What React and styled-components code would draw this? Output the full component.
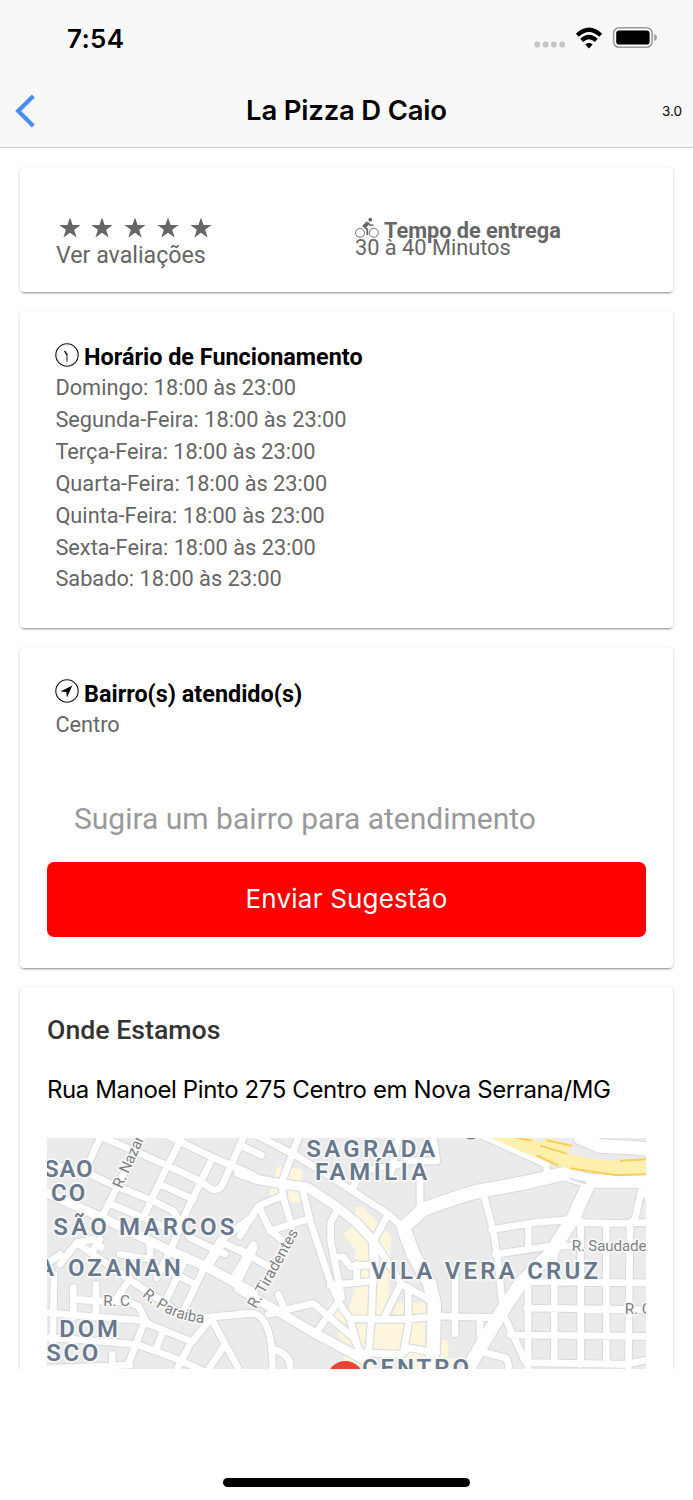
import styled, { createGlobalStyle } from "styled-components";

const GlobalStyle = createGlobalStyle`
  * { box-sizing: border-box; }
  body {
    margin: 0;
    background: #fff;
    font-family: Roboto, "Liberation Sans", sans-serif;
  }
`;

/* ---------------- Layout ---------------- */
const Page = styled.div`
  height: 1500px;
  display: flex;
  flex-direction: column;
  overflow: hidden;
  background: #fff;
`;

const Header = styled.header`
  height: 148px;
  flex: none;
  background: #f8f8f8;
  border-bottom: 1px solid #cfcfcf;
  font-family: Inter, sans-serif;
  color: #000;
`;

const StatusBar = styled.div`
  height: 76px;
  padding: 0 36px 0 67px;
  display: flex;
  align-items: center;
  justify-content: space-between;

  svg {
    margin-top: 2px;
  }
`;

const Time = styled.span`
  font-size: 26px;
  font-weight: 600;
  letter-spacing: 0.35px;
`;

const NavBar = styled.div`
  height: 70px;
  padding: 0 11px 0 15px;
  display: grid;
  grid-template-columns: 60px 1fr 60px;
  align-items: center;

  h1 {
    margin: 0 4px 2px 0;
    font-size: 27.5px;
    font-weight: 600;
    letter-spacing: -0.2px;
    text-align: center;
    white-space: nowrap;
  }

  small {
    font-size: 13.5px;
    text-align: right;
  }
`;

const Content = styled.main`
  height: 1221px;
  flex: none;
  overflow: hidden;
  padding: 19.5px 20px 0;
  display: flex;
  flex-direction: column;
  gap: 19.5px;
`;

const Footer = styled.footer`
  flex: 1;
  display: flex;
  justify-content: center;
  align-items: flex-end;
  padding-bottom: 13px;
`;

const HomeIndicator = styled.div`
  width: 247px;
  height: 9px;
  border-radius: 5px;
  background: #000;
`;

/* ---------------- Cards ---------------- */
const Card = styled.section`
  height: ${(p) => p.$height}px;
  flex: none;
  padding: ${(p) => p.$padding || "31px 27px 0"};
  border-radius: 4px;
  background: #fff;
  box-shadow: 0 3px 2px -2px rgba(0, 0, 0, 0.28), 0 1px 3px rgba(0, 0, 0, 0.24);
`;

const InfoCard = styled(Card)`
  display: grid;
  grid-template-columns: 299px 1fr;
`;

const Rating = styled.div`
  padding-top: 49px;
  color: #666;
`;

const Stars = styled.div`
  display: flex;
  gap: 10.8px;
  padding-left: 2.6px;
  height: 26.5px;
`;

const Delivery = styled.div`
  padding-top: 54.5px;
  color: #666;
  line-height: 17px;
`;

const Title = styled.h2`
  height: ${(p) => p.$height || 30}px;
  margin: 0;
  padding-left: ${(p) => p.$indent || 0}px;
  display: flex;
  align-items: center;
  gap: 5px;
  font-size: ${(p) => p.$size || 23.4}px;
  font-weight: 700;
  white-space: nowrap;

  svg {
    flex: none;
    margin-top: -5px;
  }
`;

const Line = styled.div`
  padding-left: ${(p) => p.$indent || 0}px;
  font-size: ${(p) => p.$size || 21.75}px;
  line-height: ${(p) => p.$height || 31.83}px;
  color: #666;
  white-space: nowrap;
`;

const Hours = styled.div`
  padding-top: 0.4px;
`;

const Suggestion = styled.input`
  display: block;
  width: 100%;
  height: 60px;
  margin-top: 48px;
  padding: 0 27px;
  border: 0;
  outline: 0;
  background: none;
  font: 400 30px Roboto, sans-serif;

  &::placeholder {
    color: #999;
    opacity: 1;
  }
`;

const SendButton = styled.button`
  display: block;
  width: 100%;
  height: 75px;
  margin-top: 14px;
  padding: 0 0 2px;
  border: 0;
  border-radius: 7px;
  background: #ff0000;
  color: #fff;
  font: 400 26px Inter, sans-serif;
  letter-spacing: 0.2px;
`;

const SectionTitle = styled.h2`
  margin: 0;
  color: #333;
  font-size: 26.7px;
  font-weight: 500;
  line-height: 30px;
`;

const Address = styled.p`
  margin: 30px 0 32.5px;
  color: #000;
  font: 400 24px/30px Inter, sans-serif;
  letter-spacing: -0.39px;
  white-space: nowrap;
`;

const MapView = styled.svg`
  display: block;
  width: 599px;
  height: 232px;
  background: #ebebeb;
`;

/* ---------------- Icons ---------------- */
const StatusIcons = () => (
  <svg width="124" height="26" viewBox="0 0 124 26">
    {[1.5, 9.8, 18.1, 26.4].map((x) => (
      <rect key={x} x={x} y="15.6" width="5.6" height="6" rx="2" fill="#c5c5c5" />
    ))}
    <g fill="none" stroke="#000" strokeWidth="4.3">
      <path d="M44.3 9.3 Q56 -1.7 67.7 9.3" />
      <path d="M48.7 14.4 Q56 7.8 63.3 14.4" />
    </g>
    <path d="M52.3 18.4 Q56 15.6 59.7 18.4 L56 22.5Z" fill="#000" />
    <rect x="80.6" y="1.8" width="38.5" height="19.4" rx="5.5" fill="none" stroke="#9b9b9b" strokeWidth="1.6" />
    <rect x="83.2" y="4.4" width="33.4" height="14.2" rx="3.2" fill="#000" />
    <path d="M121 8 Q124 8.8 124 11.5 Q124 14.2 121 15Z" fill="#a5a5a5" />
  </svg>
);

const BackIcon = () => (
  <svg width="21" height="34" viewBox="0 0 21 34">
    <path d="M18.3 2 L3.2 17 L18.3 32" fill="none" stroke="#4a8cff" strokeWidth="4.2" />
  </svg>
);

const Star = () => (
  <svg width="22" height="22" viewBox="0 0 22 22">
    <path d="M11 .5 L13.6 8 H21.6 L15.2 12.7 L17.6 20.4 L11 15.7 L4.4 20.4 L6.8 12.7 L.4 8 H8.4Z" fill="currentColor" />
  </svg>
);

const BikeIcon = () => (
  <svg width="24" height="22" viewBox="0 0 24 22" fill="none" stroke="currentColor">
    <circle cx="5" cy="15.8" r="4.5" strokeWidth=".9" />
    <circle cx="18.8" cy="15.8" r="4.5" strokeWidth=".9" />
    <circle cx="15.3" cy="2.7" r="1.9" fill="currentColor" stroke="none" />
    <path d="M12.4 4.8 L8.4 9 L12.3 12.3 V18.2" strokeWidth="1.8" />
    <path d="M12 5.2 L9 8.5 L11 10 L13.6 7.2" fill="currentColor" strokeWidth="1" />
    <path d="M13 5.5 L15.2 8.3 H18.5" strokeWidth="1.5" />
  </svg>
);

const ClockIcon = () => (
  <svg width="24" height="24" viewBox="0 0 24 24" fill="none" stroke="#111">
    <circle cx="12" cy="12" r="11.2" strokeWidth="1.1" />
    <circle cx="12" cy="12" r="9.3" strokeWidth=".7" strokeDasharray=".7 4.17" opacity=".55" />
    <path d="M9.6 7.8 L11.9 11.9" strokeWidth="1.4" />
    <path d="M12 10.5 V18.8" strokeWidth="1.1" opacity=".85" />
  </svg>
);

const NavigateIcon = () => (
  <svg width="24" height="24" viewBox="0 0 24 24">
    <circle cx="12" cy="12" r="11.2" fill="none" stroke="#111" strokeWidth="1.1" />
    <path d="M17.3 6.5 L5.5 12.5 L11.2 12.9 L12 18.4Z" fill="#000" />
  </svg>
);

/* ---------------- Map ---------------- */
const blocks = [
  "M712 105 L786 115 L785 160 L740 155 L705 195 L688 195Z",
  "M742 170 L780 172 L782 215 L748 212Z",
  "M948 228 H970 L1020 285 L1053 315 L1048 440 L1043 560 H945 L922 545 L944 485 L947 360 L910 308 L940 285Z",
  "M1070 515 H1155 L1155 655 L950 685 L920 690 L890 590 L865 515 L905 510 L940 580 H1050Z",
  "M1195 625 L1226 630 L1222 680 L1243 684 V717 H1080 L1085 665 H1195Z",
  "M912 670 H1000 V717 H912Z",
];

// each entry is one street, grouped by stroke width
const streets = [
  {
    width: 20,
    paths: [
      "M180 20 L140 110", "M190 20 L290 63 L385 105 L480 150 L515 175 Q540 181 550 155 L610 20",
      "M385 15 L520 80 L640 132", "M425 20 L370 130 L310 260", "M300 30 L240 150 L190 250",
      "M20 95 L150 130 L215 160 L340 210 L400 240 L450 320 L555 370",
      "M215 220 L310 260 L400 300", "M515 85 L440 240 L395 350 L350 440",
      "M360 160 L460 205", "M640 255 L540 330 L495 405 L430 540", "M110 335 L260 440 L350 500 L440 560",
      "M60 400 L110 335 L160 325 L185 350", "M110 335 L155 365 L180 325", "M240 370 L330 385 V330",
      "M20 400 L60 370", "M42 430 L38 650", "M20 545 L150 557 L300 568 L450 630",
      "M100 470 V560", "M168 460 V555", "M100 505 L270 515 L295 525 L320 575",
      "M495 560 L630 547", "M515 560 L450 640 L410 717", "M515 565 L605 730", "M555 640 L505 717",
      "M20 620 L170 630 L290 640 L400 680 L490 720", "M310 580 L265 700", "M370 600 L350 650",
      "M20 712 L270 702", "M217 670 V705", "M575 450 L640 340", "M540 330 L640 380",
      "M510 400 L550 335", "M380 505 L440 375", "M400 425 L455 455", "M265 450 L225 510",
      "M600 42 L665 73", "M655 15 L770 75 L900 155 L1045 250 L1090 290",
      "M775 20 L725 155 L730 200 L755 285", "M787 170 L810 270 L870 450 L900 520 L930 565 L960 670",
      "M600 315 L655 225 L725 195", "M655 225 L690 297 L740 340", "M690 300 L810 262",
      "M895 230 L872 275 V330 L890 420 L905 500", "M887 378 H910 L930 407 L1000 400", "M950 400 V450",
      "M870 463 L1000 450", "M600 548 L645 548 Q700 570 697 717", "M700 655 Q755 670 750 717",
      "M685 550 L820 517 L940 620 L965 670", "M715 490 L732 530", "M897 510 L860 560 L825 610",
      "M643 350 L600 440", "M600 355 L690 410", "M1140 80 V240", "M1045 250 L1000 330",
      "M940 170 L960 120 L1080 100", "M1075 20 L1050 140", "M1190 85 L1180 20", "M1100 90 H1190",
      "M930 563 L1100 565 L1200 555 L1360 560", "M960 665 L1085 670 L1105 650 L1190 665",
      "M1105 470 V580 L1090 665", "M1082 460 L1030 565", "M1000 390 L995 560 L985 670",
      "M1000 325 L1085 460 L1185 515", "M1330 15 L1430 60 L1520 100 L1520 140",
      "M1333 200 L1360 300 L1375 400 L1390 550 L1455 690", "M1355 296 L1480 275 L1600 265",
      "M1365 370 L1530 345 L1600 345", "M1465 285 V350", "M1600 275 L1770 278 L1785 265 L1805 175 L1825 200",
      "M1770 275 H1830", "M1464 440 V717", "M1543 360 V690", "M1622 270 V700", "M1699 280 V700",
      "M1770 280 L1765 717", "M1480 452 L1830 456", "M1460 531 L1830 536", "M1410 612 L1830 616",
      "M1460 695 L1760 700 L1830 685", "M1245 430 V608", "M1320 570 V615", "M1315 660 L1395 680 Q1408 690 1405 717",
    ],
  },
  {
    width: 27,
    paths: [
      "M20 185 L130 235 L250 290 L390 360 L495 405 L640 485", "M595 472 L720 545 L830 610 L970 685",
      "M595 125 L650 145 L720 158 L800 168 L880 220 L950 275 L1000 330 L1003 400",
    ],
  },
  {
    width: 40,
    paths: [
      "M1090 290 L1120 370 L1170 460 L1183 520 L1180 640 L1172 730",
      "M1090 290 L1150 235 L1240 203 L1310 182 L1440 158 L1570 128 L1650 150 L1600 260 L1530 370 L1440 460 L1380 550 L1285 710",
      "M1620 20 L1680 45 L1780 50 L1830 55", "M1640 150 L1700 150 L1830 150",
    ],
  },
];

const districts = [
  { text: "SAO", x: 12, y: 139, w: 146 },
  { text: "CO", x: 33, y: 209, w: 103 },
  { text: "SÃO MARCOS", x: 40, y: 313, w: 543 },
  { text: "A", x: -6, y: 436, w: 49 },
  { text: "OZANAN", x: 84, y: 436, w: 338 },
  { text: "DOM", x: 58, y: 619, w: 176 },
  { text: "SCO", x: 19, y: 689, w: 156 },
  { text: "SAGRADA", x: 799, y: 77, w: 387 },
  { text: "FAMÍLIA", x: 825, y: 148, w: 337 },
  { text: "VILA VERA CRUZ", x: 993, y: 443, w: 681 },
  { text: "CENTRO", x: 966, y: 736, w: 321 },
];

const streetNames = [
  { text: "R. Nazaré", x: 245, y: 175, w: 190, angle: -66 },
  { text: "R. C", x: 190, y: 524, w: 80, angle: 0 },
  { text: "R. Tiradentes", x: 648, y: 535, w: 264, angle: -61 },
  { text: "R. Saudades", x: 1595, y: 360, w: 248, angle: 0 },
  { text: "R. Ceará", x: 1754, y: 550, w: 170, angle: 0 },
];

const Label = styled.text`
  font-family: Roboto, sans-serif;
  font-size: ${(p) => (p.$district ? 72 : 46)}px;
  font-weight: ${(p) => (p.$district ? 600 : 400)};
  fill: ${(p) => (p.$district ? "#68788c" : "#7d8083")};
  stroke: #f8f8f8;
  stroke-width: 10px;
  stroke-linejoin: round;
  paint-order: stroke;
`;

const StreetMap = () => (
  <MapView viewBox="21 21 1797 696">
    <rect x="21" y="21" width="1797" height="696" fill="#ebebeb" />
    {blocks.map((d) => (
      <path key={d} d={d} fill="#fdf5dc" />
    ))}
    <g fill="none" strokeLinecap="round" strokeLinejoin="round">
      {streets.map((s) => (
        <path key={s.width} d={s.paths.join(" ")} stroke="#d8dce1" strokeWidth={s.width + 7} />
      ))}
      {streets.map((s) => (
        <path key={s.width} d={s.paths.join(" ")} stroke="#fff" strokeWidth={s.width} />
      ))}
    </g>
    <path d="M1640 75 L1680 90 L1740 85 L1725 90 L1690 94Z" fill="#dfe3e8" />
    <path d="M1585 140 L1640 151 L1637 161 L1588 145Z" fill="#dce1e8" />
    <path d="M1350 20 L1440 60 L1550 105 L1730 134 L1830 130 V80 L1740 89 L1660 83 L1580 69 L1470 20Z" fill="#fff0ae" />
    <path d="M1520 20 L1600 42 L1580 66 L1500 40Z" fill="#fff0ae" />
    <path d="M1490 73 L1555 104 M1590 112 L1730 133 L1830 129 M1740 89 L1830 84 M1500 44 L1580 68 M1520 28 L1596 44 M1430 20 L1475 29" fill="none" stroke="#f8cd5c" strokeWidth="6" />
    <ellipse cx="1293" cy="19" rx="14" ry="6" fill="#777" />
    {streetNames.map((s) => (
      <Label key={s.text} x={s.x} y={s.y} textLength={s.w} transform={`rotate(${s.angle} ${s.x} ${s.y})`}>
        {s.text}
      </Label>
    ))}
    <path id="paraiba" d="M305 494 Q395 576 510 577" fill="none" />
    <Label>
      <textPath href="#paraiba">R. Paraíba</textPath>
    </Label>
    {districts.map((d) => (
      <Label $district key={d.text} x={d.x} y={d.y} textLength={d.w}>
        {d.text}
      </Label>
    ))}
    <circle cx="916" cy="746" r="56" fill="#ea4335" />
  </MapView>
);

/* ---------------- Component ---------------- */
const hours = [
  "Domingo: 18:00 às 23:00",
  "Segunda-Feira: 18:00 às 23:00",
  "Terça-Feira: 18:00 às 23:00",
  "Quarta-Feira: 18:00 às 23:00",
  "Quinta-Feira: 18:00 às 23:00",
  "Sexta-Feira: 18:00 às 23:00",
  "Sabado: 18:00 às 23:00",
];

export default function App() {
  return (
    <Page>
      <GlobalStyle />
      <Header>
        <StatusBar>
          <Time>7:54</Time>
          <StatusIcons />
        </StatusBar>
        <NavBar>
          <BackIcon />
          <h1>La Pizza D Caio</h1>
          <small>3.0</small>
        </NavBar>
      </Header>

      <Content>
        <InfoCard $height={124} $padding="0 0 0 36px">
          <Rating>
            <Stars>
              {[1, 2, 3, 4, 5].map((n) => <Star key={n} />)}
            </Stars>
            <Line $height={24} $size={23.2}>Ver avaliações</Line>
          </Rating>
          <Delivery>
            <Title $height={17} $size={21.7}><BikeIcon /> Tempo de entrega</Title>
            <Line $height={17}>30 à 40 Minutos</Line>
          </Delivery>
        </InfoCard>

        <Card $height={317}>
          <Title $indent={8}><ClockIcon /> Horário de Funcionamento</Title>
          <Hours>
            {hours.map((h) => <Line key={h} $indent={8.4}>{h}</Line>)}
          </Hours>
        </Card>

        <Card $height={320}>
          <Title $indent={8}><NavigateIcon /> Bairro(s) atendido(s)</Title>
          <Line $indent={8.4}>Centro</Line>
          <Suggestion placeholder="Sugira um bairro para atendimento" />
          <SendButton>Enviar Sugestão</SendButton>
        </Card>

        <Card $height={420} $padding="28px 27px 0">
          <SectionTitle>Onde Estamos</SectionTitle>
          <Address>Rua Manoel Pinto 275 Centro em Nova Serrana/MG</Address>
          <StreetMap />
        </Card>
      </Content>

      <Footer>
        <HomeIndicator />
      </Footer>
    </Page>
  );
}
